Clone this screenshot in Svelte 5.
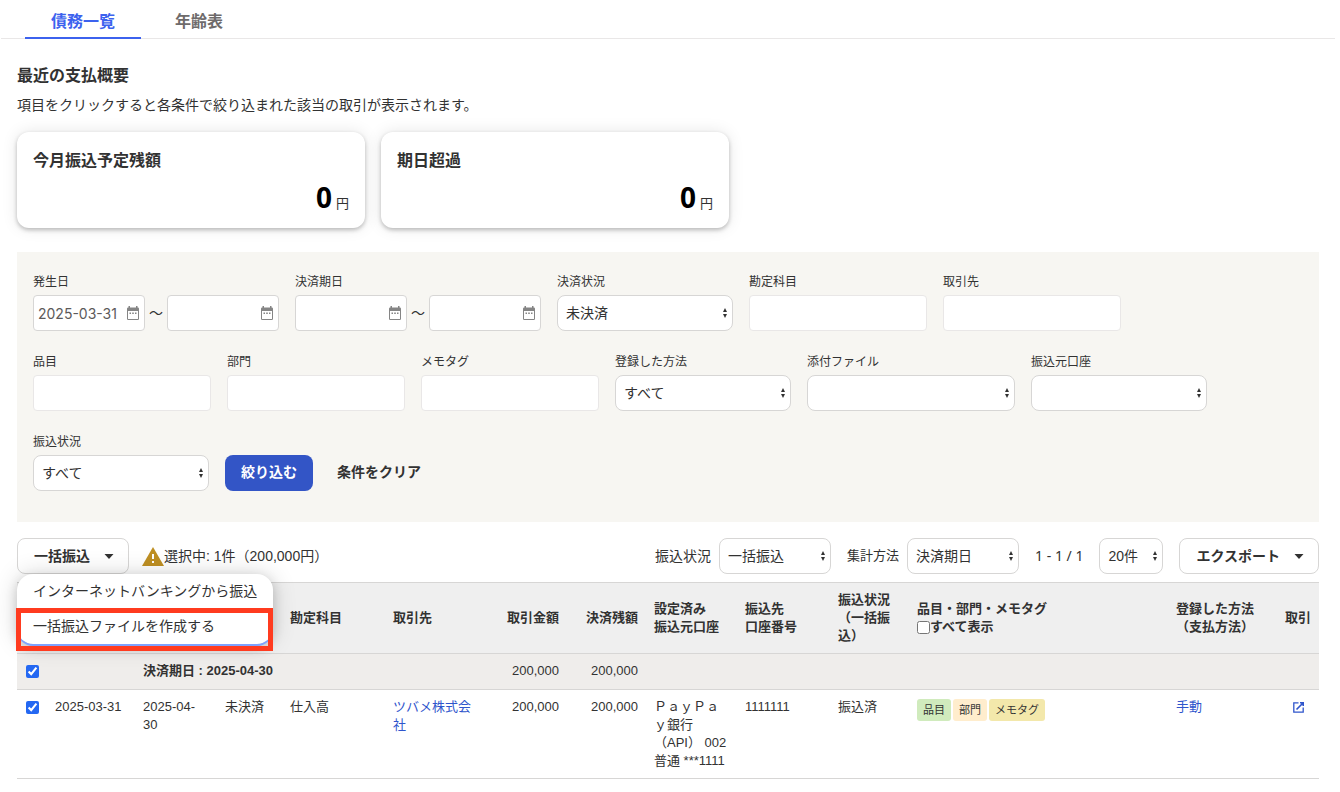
<script lang="ts">
  type Field = {
    id: string;
    label: string;
    kind: 'text' | 'select' | 'range';
    value?: string;
    wide?: boolean;
  };

  const tabs = ['債務一覧', '年齢表'];
  let activeTab = $state('債務一覧');

  const summaries = [
    { title: '今月振込予定残額', amount: 0 },
    { title: '期日超過', amount: 0 },
  ];

  const fields: Field[] = [
    { id: 'issue-date', label: '発生日', kind: 'range', value: '2025-03-31' },
    { id: 'due-date', label: '決済期日', kind: 'range', value: '' },
    { id: 'settlement', label: '決済状況', kind: 'select', value: '未決済' },
    { id: 'account-item', label: '勘定科目', kind: 'text' },
    { id: 'partner', label: '取引先', kind: 'text' },
    { id: 'item', label: '品目', kind: 'text' },
    { id: 'section', label: '部門', kind: 'text' },
    { id: 'memo-tag', label: 'メモタグ', kind: 'text' },
    { id: 'registered-by', label: '登録した方法', kind: 'select', value: 'すべて' },
    { id: 'attachment', label: '添付ファイル', kind: 'select', value: '', wide: true },
    { id: 'source-account', label: '振込元口座', kind: 'select', value: '' },
    { id: 'transfer-status', label: '振込状況', kind: 'select', value: 'すべて' },
  ];

  const menuItems = ['インターネットバンキングから振込', '一括振込ファイルを作成する'];

  // 0 = takes the remaining width
  const columnWidths = [30, 88, 82, 65, 103, 103, 79, 79, 91, 93, 79, 0, 109, 42];

  const rows = [
    {
      issued: '2025-03-31',
      due: '2025-04-30',
      status: '未決済',
      account: '仕入高',
      partner: 'ツバメ株式会社',
      amount: '200,000',
      balance: '200,000',
      source: ['ＰａｙＰａ', 'ｙ銀行', '（API） 002', '普通 ***1111'],
      destination: '1111111',
      transfer: '振込済',
      method: '手動',
    },
  ];

  let groupChecked = $state(true);
  let rowChecked = $state(true);
  let showAll = $state(false);
  let menuOpen = $state(true);
</script>

{#snippet calendarIcon()}
  <svg class="calendar" viewBox="0 0 12 14" width="12" height="14" aria-hidden="true">
    <path
      fill="#858585"
      fill-rule="evenodd"
      d="M1.500 0h1.500v1.500h6V0h1.500v1.500h.3A1.200 1.200 0 0 1 12 2.700v10.100a1.200 1.200 0 0 1-1.200 1.200H1.200A1.200 1.200 0 0 1 0 12.800V2.700A1.200 1.200 0 0 1 1.200 1.500h.3zM1 5v8h10V5z"
    />
    <path fill="#858585" d="M2.500 6.500H4V8H2.500zM5.200 6.500h1.600V8H5.200zM8 6.500h1.500V8H8z" />
  </svg>
{/snippet}

{#snippet caret()}
  <svg class="caret" viewBox="0 0 10 5" width="10" height="5" aria-hidden="true">
    <path d="M.5 0h9L5 5z" fill="#323232" />
  </svg>
{/snippet}

<nav class="tabs">
  {#each tabs as tab}
    <button class="tab" class:active={activeTab === tab} onclick={() => (activeTab = tab)}>{tab}</button>
  {/each}
</nav>

<main>
  <h1>最近の支払概要</h1>
  <p class="lead">項目をクリックすると各条件で絞り込まれた該当の取引が表示されます。</p>

  <div class="cards">
    {#each summaries as summary}
      <section class="card">
        <h2>{summary.title}</h2>
        <p class="amount"><strong>{summary.amount}</strong><span>円</span></p>
      </section>
    {/each}
  </div>

  <form class="filters" onsubmit={(e) => e.preventDefault()}>
    {#each fields as field}
      <div class="field">
        <label for={field.id}>{field.label}</label>
        {#if field.kind === 'range'}
          <div class="range">
            <span class="date">
              <input id={field.id} type="text" value={field.value} />
              {@render calendarIcon()}
            </span>
            <span class="tilde">～</span>
            <span class="date">
              <input type="text" aria-label="{field.label} 終了" />
              {@render calendarIcon()}
            </span>
          </div>
        {:else if field.kind === 'select'}
          <select id={field.id} class:wide={field.wide}>
            <option>{field.value}</option>
          </select>
        {:else}
          <input id={field.id} class="plain" type="text" />
        {/if}
      </div>
    {/each}
    <div class="actions">
      <button class="primary" type="submit">絞り込む</button>
      <button class="clear" type="reset">条件をクリア</button>
    </div>
  </form>

  <div class="toolbar">
    <div class="dropdown">
      <button class="outline" onclick={() => (menuOpen = !menuOpen)}>一括振込 {@render caret()}</button>
      {#if menuOpen}
        <div class="menu">
          {#each menuItems as item}
            <button class="menu-item">{item}</button>
          {/each}
          <div class="highlight"></div>
        </div>
      {/if}
    </div>
    <div class="selection">
      <svg viewBox="0 0 22 19" width="22" height="19" aria-hidden="true">
        <path d="M11 0l11 19H0z" fill="#be8f23" />
        <path d="M10 7h2v5h-2zM10 14h2v2h-2z" fill="#fff" />
      </svg>
      <span>選択中: 1件（200,000円）</span>
    </div>
    <div class="controls">
      <label for="list-transfer">振込状況</label>
      <select id="list-transfer" class="medium"><option>一括振込</option></select>
      <label for="list-group" class="small-label">集計方法</label>
      <select id="list-group" class="medium"><option>決済期日</option></select>
      <span class="pages">1 - 1 / 1</span>
      <select class="short" aria-label="件数"><option>20件</option></select>
      <button class="outline">エクスポート {@render caret()}</button>
    </div>
  </div>

  <table>
    <colgroup>
      {#each columnWidths as width}
        <col style={width ? `width: ${width}px` : ''} />
      {/each}
    </colgroup>
    <thead>
      <tr>
        <th></th>
        <th></th>
        <th></th>
        <th></th>
        <th>勘定科目</th>
        <th>取引先</th>
        <th class="num">取引金額</th>
        <th class="num">決済残額</th>
        <th>設定済み<br />振込元口座</th>
        <th>振込先<br />口座番号</th>
        <th>振込状況（一括振込）</th>
        <th>
          品目・部門・メモタグ
          <label class="show-all"><input type="checkbox" bind:checked={showAll} />すべて表示</label>
        </th>
        <th>登録した方法<br />（支払方法）</th>
        <th>取引</th>
      </tr>
    </thead>
    <tbody>
      <tr class="group">
        <td class="check"><input type="checkbox" aria-label="グループを選択" bind:checked={groupChecked} /></td>
        <td></td>
        <td colspan="4"><b>決済期日 : 2025-04-30</b></td>
        <td class="num">200,000</td>
        <td class="num">200,000</td>
        <td colspan="6"></td>
      </tr>
      {#each rows as row}
        <tr>
          <td class="check"><input type="checkbox" aria-label="取引を選択" bind:checked={rowChecked} /></td>
          <td>{row.issued}</td>
          <td>{row.due}</td>
          <td>{row.status}</td>
          <td>{row.account}</td>
          <td><a href="#partner">{row.partner}</a></td>
          <td class="num">{row.amount}</td>
          <td class="num">{row.balance}</td>
          <td class="source">
            {#each row.source as line}
              <div>{line}</div>
            {/each}
          </td>
          <td>{row.destination}</td>
          <td>{row.transfer}</td>
          <td>
            <div class="tags">
              <span class="tag item">品目</span>
              <span class="tag section">部門</span>
              <span class="tag memo">メモタグ</span>
            </div>
          </td>
          <td><a href="#method">{row.method}</a></td>
          <td>
            <a class="open" href="#deal" aria-label="取引を開く">
              <svg viewBox="0 0 11 11" width="11" height="11" fill="none" stroke="#2f55cc" aria-hidden="true">
                <path d="M5.500 .8H.8v9.400h9.400V5.500" stroke-width="1.300" />
                <path d="M7 .8h3.200V4M10 1L3.500 7.500" stroke-width="1.600" />
              </svg>
            </a>
          </td>
        </tr>
      {/each}
    </tbody>
  </table>
</main>

<style>
  :global(body) {
    margin: 0;
    background: #fff;
    color: #323232;
    font-family: 'Liberation Sans', 'Noto Sans CJK JP', sans-serif;
    font-size: 14px;
    line-height: 20px;
  }

  button,
  input,
  select {
    box-sizing: border-box;
    margin: 0;
    color: inherit;
    font: inherit;
  }

  button {
    border: 0;
    background: none;
    cursor: pointer;
  }

  .tabs {
    display: flex;
    gap: 8px;
    height: 38px;
    margin: 0 5px 0 1px;
    padding-left: 24px;
    border-bottom: 1px solid #e9e7e7;
  }

  .tab {
    height: 39px;
    padding: 6px 26px 0;
    border-bottom: 2px solid transparent;
    color: #6e6b6b;
    font-size: 16px;
    font-weight: 700;
  }

  .tab.active {
    border-color: #3c62ee;
    color: #3c62ee;
  }

  main {
    padding: 25px 21px 12px 17px;
  }

  h1,
  h2 {
    margin: 0;
    font-size: 16px;
    line-height: 24px;
    font-weight: 700;
  }

  .lead {
    margin: 7px 0 17px;
  }

  .cards {
    display: flex;
    gap: 16px;
  }

  .card {
    box-sizing: border-box;
    width: 348px;
    height: 96px;
    padding: 17px 16px 0;
    border-radius: 12px;
    box-shadow: 0 0 16px rgba(0, 0, 0, 0.1), 0 2px 4px rgba(0, 0, 0, 0.24);
  }

  .amount {
    display: flex;
    justify-content: flex-end;
    align-items: baseline;
    gap: 4px;
    margin: 8px 0 0;
    font-size: 13px;
    line-height: 32px;
  }

  .amount strong {
    color: #000;
    font-family: 'Noto Sans', sans-serif;
    font-size: 28px;
  }

  .filters {
    display: flex;
    flex-wrap: wrap;
    align-items: flex-end;
    gap: 21px 16px;
    margin-top: 24px;
    padding: 20px 16px 31px;
    background: #f7f6f2;
  }

  .field {
    display: flex;
    flex-direction: column;
    gap: 3px;
  }

  .field label {
    font-size: 12px;
  }

  .range {
    display: flex;
    align-items: center;
  }

  .tilde {
    width: 22px;
    text-align: center;
  }

  .date {
    position: relative;
    display: block;
  }

  .date input {
    display: block;
    width: 112px;
    height: 36px;
    padding: 1px 4px 0;
    border: 1px solid #d7d6d5;
    border-radius: 4px;
    background: #fff;
    color: #5c5a5a;
    font-family: Inter, sans-serif;
  }

  .calendar {
    position: absolute;
    top: 11px;
    right: 6px;
  }

  .plain {
    width: 178px;
    height: 36px;
    border: 1px solid #e9e7e7;
    border-radius: 4px;
    background: #fff;
  }

  select {
    width: 176px;
    height: 36px;
    padding: 0 16px 0 8px;
    border: 1px solid #d7d6d5;
    border-radius: 8px;
    appearance: none;
    background: #fff url("data:image/svg+xml,%3Csvg xmlns='http://www.w3.org/2000/svg' width='4' height='10'%3E%3Cpath d='M0 4h4L2 0zM0 6h4L2 10z' fill='%23323232'/%3E%3C/svg%3E") no-repeat right 5px center;
  }

  select.wide {
    width: 208px;
  }

  select.medium {
    width: 112px;
  }

  select.short {
    width: 64px;
  }

  .actions {
    display: flex;
    gap: 8px;
  }

  .primary,
  .clear {
    height: 36px;
    padding: 0 16px 2px;
    border-radius: 8px;
    font-weight: 700;
  }

  .primary {
    background: #3355c6;
    color: #fff;
  }

  .toolbar {
    display: flex;
    align-items: center;
    margin: 16px 0 8px;
  }

  .dropdown {
    position: relative;
  }

  .outline {
    display: flex;
    align-items: center;
    gap: 14px;
    height: 36px;
    padding: 0 14px 0 16px;
    border: 1px solid #d7d6d5;
    border-radius: 8px;
    background: #fff;
    font-weight: 700;
  }

  .menu {
    position: absolute;
    top: 36px;
    left: 0;
    z-index: 1;
    width: 256px;
    border-radius: 16px;
    background: #fff;
    box-shadow: 0 0 24px rgba(0, 0, 0, 0.16), 0 4px 12px rgba(0, 0, 0, 0.16);
  }

  .menu-item {
    display: block;
    width: 100%;
    height: 35px;
    padding: 0 16px 2px;
    text-align: left;
    white-space: nowrap;
  }

  .menu-item:last-of-type {
    border-radius: 0 0 16px 16px;
    box-shadow: 0 2px 0 #7da2ff;
  }

  .highlight {
    position: absolute;
    top: 34px;
    right: 0;
    left: -1px;
    height: 33px;
    border: 5px solid #ff3b1f;
    pointer-events: none;
  }

  .selection {
    display: flex;
    align-items: center;
    margin-left: 13px;
  }

  .controls {
    display: flex;
    align-items: center;
    margin-left: auto;
  }

  .controls select {
    margin: 0 16px 0 8px;
  }

  .small-label {
    font-size: 13px;
  }

  .pages {
    margin-right: 8px;
    font-family: 'Noto Sans', sans-serif;
  }

  table {
    width: 100%;
    border-top: 1px solid #d7d6d5;
    border-spacing: 0;
    table-layout: fixed;
    font-size: 13px;
    line-height: 18px;
  }

  th,
  td {
    padding: 8px;
    border-bottom: 1px solid #d7d6d5;
    text-align: left;
    vertical-align: top;
  }

  th {
    background: #efefef;
    vertical-align: middle;
  }

  .group td {
    height: 19px;
    background: #efedeb;
  }

  .num {
    text-align: right;
  }

  .check input {
    display: block;
    width: 13px;
    height: 13px;
    margin: 3px 0 0 1px;
    accent-color: #2468f2;
  }

  .show-all {
    display: flex;
    align-items: center;
  }

  .show-all input {
    width: 13px;
    height: 13px;
  }

  .source {
    white-space: nowrap;
  }

  .tags {
    display: flex;
    gap: 2px;
    padding-top: 1px;
  }

  .tag {
    padding: 2px 6px;
    border-radius: 3px;
    font-size: 11px;
  }

  .item {
    background: #d0ebbd;
  }

  .section {
    background: #ffedcd;
  }

  .memo {
    background: #f3e8ab;
  }

  a {
    color: #2f55cc;
    text-decoration: none;
  }

  .open {
    display: flex;
    justify-content: center;
    padding-top: 4px;
  }
</style>
